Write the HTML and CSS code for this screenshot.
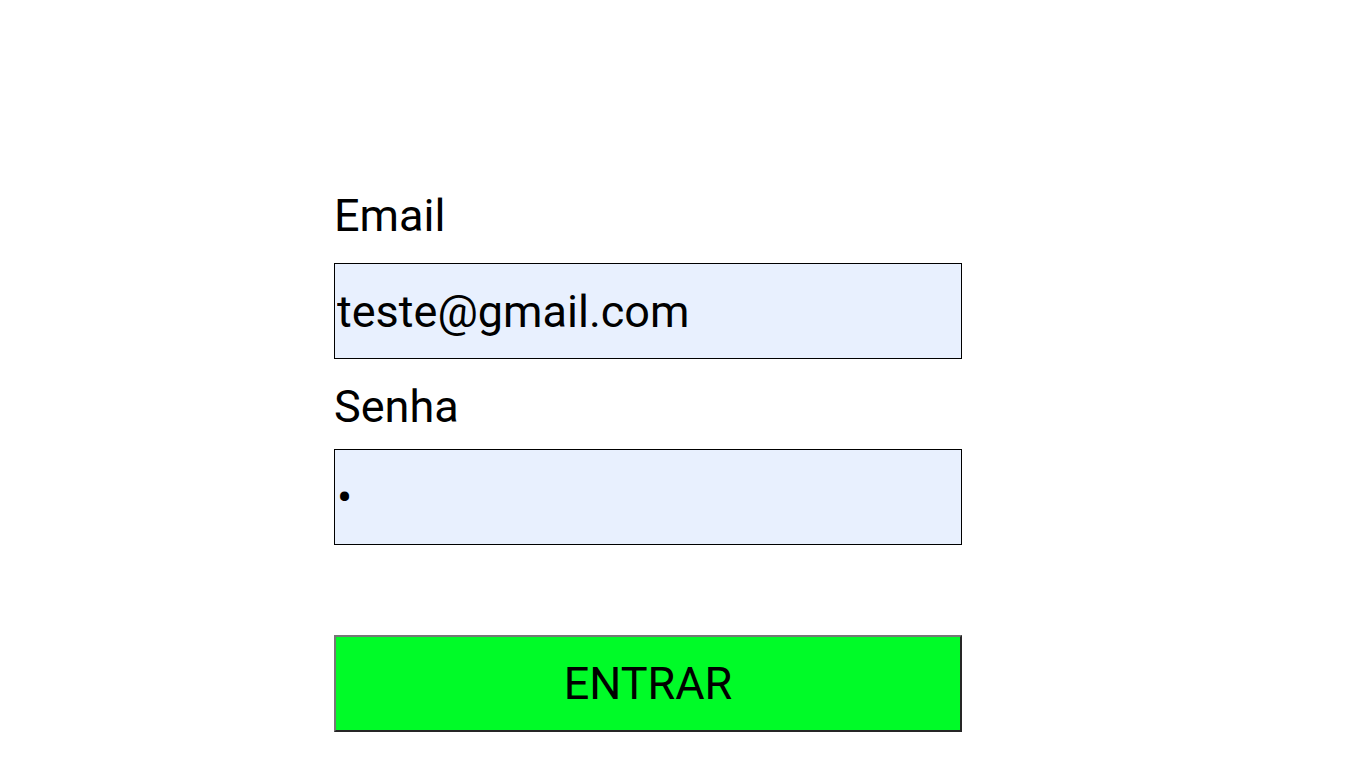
FILE: index.html
```html
<!DOCTYPE html>
<html lang="pt">
<head>
<meta charset="utf-8">
<title>Login</title>
<link rel="stylesheet" href="styles.css">
</head>
<body>
<form class="login">
  <label class="label label-email" for="email">Email</label>
  <input class="field field-email" id="email" type="text" value="teste@gmail.com">
  <label class="label label-senha" for="senha">Senha</label>
  <input class="field field-senha" id="senha" type="password" value="1">
  <button class="btn" type="button">ENTRAR</button>
</form>
</body>
</html>
```
FILE: styles.css
```css
html, body {
  margin: 0;
  padding: 0;
  background: #ffffff;
}
body {
  font-family: Roboto, "Liberation Sans", sans-serif;
}
.login {
  display: flex;
  flex-direction: column;
  width: 628px;
  margin-left: 334px;
  padding-top: 190px;
}
.label {
  font-size: 45px;
  line-height: 52px;
  color: #000;
}
.field {
  box-sizing: border-box;
  height: 96px;
  width: 628px;
  margin: 0;
  border: 1px solid #000;
  background: #e8f0fe;
  padding: 1px 2px;
  font-family: Roboto, "Liberation Sans", sans-serif;
  font-size: 45px;
  color: #000;
  outline: none;
}
.field-email { margin-top: 21px; }
.label-senha { margin-top: 22px; }
.field-senha { margin-top: 16px; }
.btn {
  box-sizing: border-box;
  margin-top: 90px;
  height: 97px;
  width: 628px;
  border-width: 2px;
  border-style: solid;
  border-color: #767676 #262626 #262626 #767676;
  background: #00fb28;
  font-family: Roboto, "Liberation Sans", sans-serif;
  font-size: 45px;
  color: #000;
  padding: 0;
}
```
